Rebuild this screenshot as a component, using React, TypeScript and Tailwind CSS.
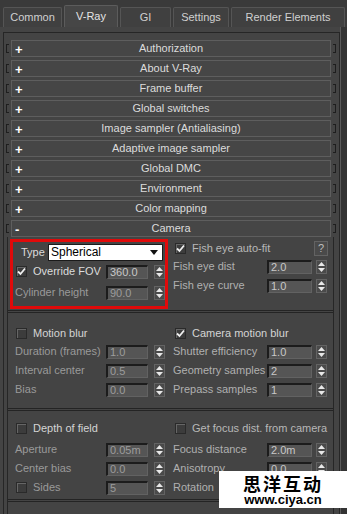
const font = "font-['Liberation_Sans',Arial,sans-serif]";

const rollouts = [
  "Authorization",
  "About V-Ray",
  "Frame buffer",
  "Global switches",
  "Image sampler (Antialiasing)",
  "Adaptive image sampler",
  "Global DMC",
  "Environment",
  "Color mapping",
];

const tabs = [
  { name: "Common", w: "w-[59px]" },
  { name: "V-Ray", w: "w-[54px]", active: true },
  { name: "GI", w: "w-[51px]" },
  { name: "Settings", w: "w-[56px]" },
  { name: "Render Elements", w: "w-[114px]" },
];

function Bracket({ right }: { right?: boolean }) {
  return (
    <div
      className={`h-[9px] w-[3px] border-y border-[#1e1e1e] ${right ? "border-r" : "border-l"}`}
    />
  );
}

function RolloutHeader({ title, open }: { title: string; open?: boolean }) {
  return (
    <div className="relative flex h-[17px] w-[320px] items-center justify-center border border-[#5e5e5e] bg-[#464646] text-[11px] text-[#dcdcdc]">
      <span className="absolute left-[3px] top-[-1px] text-[13px] font-bold text-white">{open ? "-" : "+"}</span>
      {title}
    </div>
  );
}

function Checkbox({ checked }: { checked?: boolean }) {
  return (
    <div className="flex h-[11px] w-[11px] items-center justify-center border border-[#2a2a2a] bg-[#3c3c3c] shadow-[inset_1px_1px_0_#666]">
      {checked ? (
        <svg width="9" height="9" viewBox="0 0 9 9">
          <path d="M1 4.5 L3.5 7 L8 1.5" stroke="#f0f0f0" strokeWidth="1.8" fill="none" />
        </svg>
      ) : null}
    </div>
  );
}

function Spinner() {
  return (
    <div className="flex h-[14px] w-[11px] flex-col items-center justify-center gap-[2px] border border-[#636363] bg-[#4a4a4a]">
      <svg width="7" height="4" viewBox="0 0 7 4">
        <path d="M0 4 L3.5 0 L7 4 Z" fill="#e8e8e8" />
      </svg>
      <svg width="7" height="4" viewBox="0 0 7 4">
        <path d="M0 0 L3.5 4 L7 0 Z" fill="#e8e8e8" />
      </svg>
    </div>
  );
}

function Field({ value, wide, dim }: { value: string; wide?: boolean; dim?: boolean }) {
  return (
    <div
      className={`flex h-[14px] items-center border-l-2 border-t-2 border-r border-b border-l-[#1c1c1c] border-t-[#1c1c1c] border-r-[#626262] border-b-[#626262] bg-[#555555] pl-[2px] text-[11px] ${
        wide ? "w-[45px]" : "w-[42px]"
      } ${dim ? "text-[#9c9c9c]" : "text-[#c8c8c8]"}`}
    >
      {value}
    </div>
  );
}

function LeftRow({ label, value, dim, check }: { label: string; value: string; dim?: boolean; check?: boolean }) {
  return (
    <div className="flex h-[19px] items-center">
      <div className={`flex w-[98px] items-center gap-[6px] text-[11px] ${check ? "pl-[8px]" : "pl-[7px]"} ${dim ? "text-[#9a9a9a]" : "text-[#b4b4b4]"}`}>
        {check ? <Checkbox /> : null}
        {label}
      </div>
      <Field value={value} dim={dim} />
      <div className="ml-[6px]">
        <Spinner />
      </div>
    </div>
  );
}

function RightRow({ label, value }: { label: string; value: string }) {
  return (
    <div className="flex h-[19px] items-center">
      <div className="w-[95px] pl-[1px] text-[11px] text-[#b0b0b0]">{label}</div>
      <Field value={value} wide />
      <div className="ml-[4px]">
        <Spinner />
      </div>
    </div>
  );
}

function CheckRow({ label, checked, left, dim }: { label: string; checked?: boolean; left?: boolean; dim?: boolean }) {
  return (
    <div className={`flex h-[12px] items-center gap-[6px] text-[11px] ${left ? "pl-[8px]" : "pl-[3px]"} ${dim ? "text-[#b8b8b8]" : "text-[#d4d4d4]"}`}>
      <Checkbox checked={checked} />
      {label}
    </div>
  );
}

function Separator() {
  return <div className="h-[3px] border-y border-[#242424]" />;
}

export default function App() {
  return (
    <div className={`relative h-[514px] w-[347px] overflow-hidden bg-[#3a3a3a] ${font}`}>
      <div className="flex h-[27px] items-end gap-[2px] pl-[3px]">
        {tabs.map((tab) => (
          <div
            key={tab.name}
            className={`flex items-center justify-center rounded-t-[2px] border border-b-0 text-[11px] ${tab.w} ${
              tab.active
                ? "h-[22px] border-[#5c5c5c] bg-[#464646] text-[#e4e4e4]"
                : "h-[20px] border-[#555555] bg-[#404040] text-[#d0d0d0]"
            }`}
          >
            {tab.name}
          </div>
        ))}
      </div>

      <div className="flex h-[487px]">
        <div className="w-[340px] bg-[#444444] pt-[5px]">
          <div className="ml-[3px] h-full border-l border-t border-r border-[#262626] pt-[7px]">
            <div className="flex flex-col gap-[3px]">
              {rollouts.map((title) => (
                <div key={title} className="flex h-[17px] items-center gap-[2px] pl-[2px]">
                  <Bracket />
                  <RolloutHeader title={title} />
                  <Bracket right />
                </div>
              ))}

              <div className="flex flex-col">
                <div className="flex h-[17px] items-center gap-[2px] pl-[2px]">
                  <Bracket />
                  <RolloutHeader title="Camera" open />
                  <Bracket right />
                </div>

                <div className="ml-[3px] w-[327px] border-x border-[#262626]">
                  {/* camera type */}
                  <div className="flex h-[73px]">
                    <div className="w-[164px] pl-[2px] pt-[2px]">
                      <div className="h-[70px] w-[158px] border-[3px] border-[#e00a0a]">
                        <div className="flex h-[19px] items-center pt-[1px]">
                          <span className="w-[35px] pl-[8px] text-[11px] text-[#dcdcdc]">Type</span>
                          <div className="flex h-[17px] w-[115px] items-center justify-between border border-[#1a1a1a] bg-white pl-[2px] pr-[4px] text-[12px] text-black">
                            Spherical
                            <svg width="8" height="5" viewBox="0 0 8 5">
                              <path d="M0 0 L8 0 L4 5 Z" fill="#111" />
                            </svg>
                          </div>
                        </div>
                        <div className="flex h-[21px] items-center">
                          <div className="flex w-[93px] items-center gap-[6px] pl-[3px] text-[11px] text-[#dcdcdc]">
                            <Checkbox checked />
                            Override FOV
                          </div>
                          <Field value="360.0" />
                          <div className="ml-[6px]">
                            <Spinner />
                          </div>
                        </div>
                        <div className="flex h-[21px] items-center">
                          <div className="w-[93px] pl-[2px] text-[11px] text-[#9a9a9a]">Cylinder height</div>
                          <Field value="90.0" dim />
                          <div className="ml-[6px]">
                            <Spinner />
                          </div>
                        </div>
                      </div>
                    </div>
                    <div className="w-[161px] pt-[3px]">
                      <div className="flex h-[17px] items-center justify-between pr-[5px]">
                        <CheckRow label="Fish eye auto-fit" checked dim />
                        <div className="flex h-[15px] w-[14px] items-center justify-center border border-[#636363] bg-[#4a4a4a] text-[11px] text-[#bdbdbd]">
                          ?
                        </div>
                      </div>
                      <RightRow label="Fish eye dist" value="2.0" />
                      <RightRow label="Fish eye curve" value="1.0" />
                    </div>
                  </div>

                  <Separator />

                  {/* motion blur */}
                  <div className="flex h-[95px] pt-[14px]">
                    <div className="w-[164px]">
                      <CheckRow label="Motion blur" left />
                      <div className="mt-[3px]">
                        <LeftRow label="Duration (frames)" value="1.0" dim />
                        <LeftRow label="Interval center" value="0.5" dim />
                        <LeftRow label="Bias" value="0.0" dim />
                      </div>
                    </div>
                    <div className="w-[161px]">
                      <CheckRow label="Camera motion blur" checked />
                      <div className="mt-[3px]">
                        <RightRow label="Shutter efficiency" value="1.0" />
                        <RightRow label="Geometry samples" value="2" />
                        <RightRow label="Prepass samples" value="1" />
                      </div>
                    </div>
                  </div>

                  <Separator />

                  {/* depth of field */}
                  <div className="flex h-[88px] pt-[11px]">
                    <div className="w-[164px]">
                      <CheckRow label="Depth of field" left />
                      <div className="mt-[6px]">
                        <LeftRow label="Aperture" value="0.05m" dim />
                        <LeftRow label="Center bias" value="0.0" dim />
                        <LeftRow label="Sides" value="5" dim check />
                      </div>
                    </div>
                    <div className="w-[161px]">
                      <CheckRow label="Get focus dist. from camera" dim />
                      <div className="mt-[6px]">
                        <RightRow label="Focus distance" value="2.0m" />
                        <RightRow label="Anisotropy" value="0.0" />
                        <RightRow label="Rotation" value="0.0" />
                      </div>
                    </div>
                  </div>

                  <Separator />
                  <div className="h-[20px]" />
                </div>
              </div>
            </div>
          </div>
        </div>
        <div className="w-[7px] border-l border-[#5a5a5a] bg-[#333333]" />
      </div>

      {/* watermark */}
      <div className="absolute left-[219px] top-[471px] flex h-[37px] w-[128px] flex-col items-center justify-center bg-white font-['Noto_Sans_CJK_SC',sans-serif] leading-none text-black">
        <span className="text-[18px] font-bold tracking-[2px]">思洋互动</span>
        <span className="mt-[1px] font-['Liberation_Sans',Arial,sans-serif] text-[13px] font-bold">www.ciya.cn</span>
      </div>
    </div>
  );
}
